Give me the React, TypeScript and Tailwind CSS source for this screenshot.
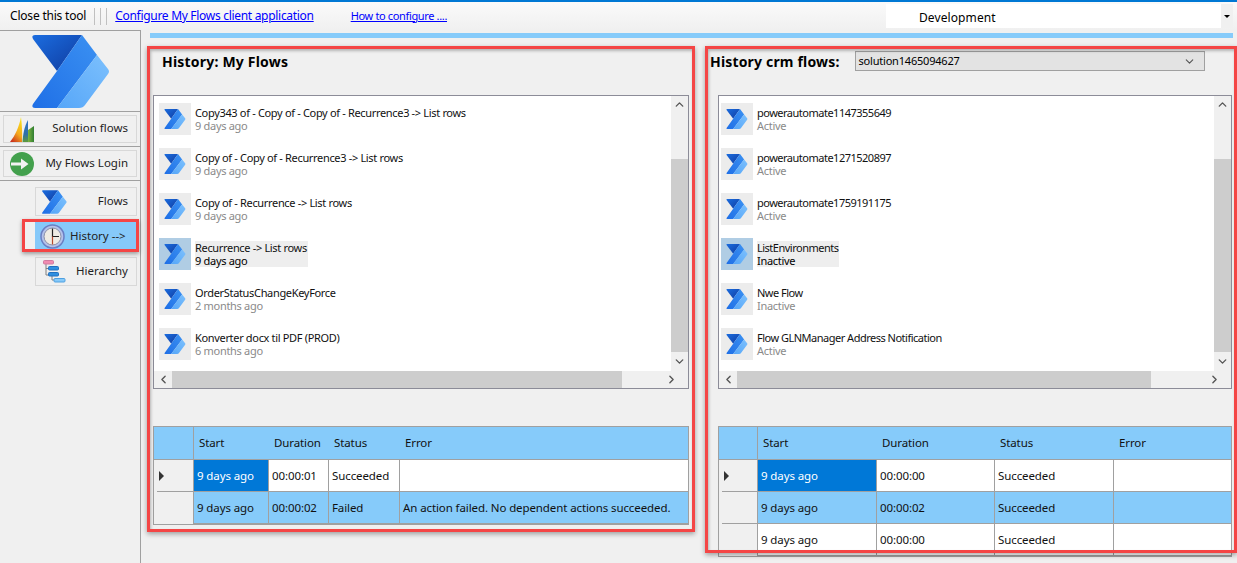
import { ChevronDown, ChevronLeft, ChevronRight, ChevronUp } from "lucide-react";

const myFlows = [
  { title: "Copy343 of - Copy of - Copy of - Recurrence3 -> List rows", sub: "9 days ago" },
  { title: "Copy of - Copy of - Recurrence3 -> List rows", sub: "9 days ago" },
  { title: "Copy of - Recurrence -> List rows", sub: "9 days ago" },
  { title: "Recurrence -> List rows", sub: "9 days ago", selected: true },
  { title: "OrderStatusChangeKeyForce", sub: "2 months ago" },
  { title: "Konverter docx til PDF (PROD)", sub: "6 months ago" },
];

const crmFlows = [
  { title: "powerautomate1147355649", sub: "Active" },
  { title: "powerautomate1271520897", sub: "Active" },
  { title: "powerautomate1759191175", sub: "Active" },
  { title: "ListEnvironments", sub: "Inactive", selected: true },
  { title: "Nwe Flow", sub: "Inactive" },
  { title: "Flow GLNManager Address Notification", sub: "Active" },
];

// power automate logo
function FlowIcon({ className }: { className: string }) {
  return (
    <svg viewBox="0 0 78 73" className={className}>
      <defs>
        <linearGradient id="flowDark" x1="0" y1="0" x2="1" y2="1">
          <stop offset="0" stopColor="#1b6de0" />
          <stop offset="1" stopColor="#0f3a9e" />
        </linearGradient>
        <linearGradient id="flowMid" x1="1" y1="0" x2="0" y2="1">
          <stop offset="0" stopColor="#3b91f2" />
          <stop offset="1" stopColor="#1f6fe6" />
        </linearGradient>
        <linearGradient id="flowLight" x1="1" y1="0" x2="0" y2="1">
          <stop offset="0" stopColor="#7cc0fd" />
          <stop offset="1" stopColor="#56a6f8" />
        </linearGradient>
      </defs>
      <path d="M3 0H50L25 36L1 4Q-1 0 3 0Z" fill="url(#flowDark)" />
      <path d="M50 0L65 20L25 73H3Q-1 73 1 69L25 36Z" fill="url(#flowMid)" />
      <path d="M65 20L76 34Q78 36.500 76 39L53 70Q51 73 47 73H25Z" fill="url(#flowLight)" />
    </svg>
  );
}

function DynamicsIcon() {
  return (
    <svg viewBox="0 0 24 25" className="h-[25px] w-[24px]">
      <defs>
        <linearGradient id="sail" x1="0.700" y1="0" x2="0.200" y2="1">
          <stop offset="0" stopColor="#f7e01c" />
          <stop offset="0.550" stopColor="#f5a81c" />
          <stop offset="1" stopColor="#c9301c" />
        </linearGradient>
        <linearGradient id="sailBlue" x1="0" y1="0" x2="0" y2="1">
          <stop offset="0" stopColor="#2f73c4" />
          <stop offset="0.650" stopColor="#2f6fa8" />
          <stop offset="1" stopColor="#5c9a3a" />
        </linearGradient>
        <linearGradient id="sailGreen" x1="0" y1="0" x2="1" y2="0">
          <stop offset="0" stopColor="#7db53f" />
          <stop offset="1" stopColor="#2f7d32" />
        </linearGradient>
      </defs>
      <path d="M0 25C5 19 9 10 11 0C12 8 12.500 17 12 25Z" fill="url(#sail)" />
      <path d="M12.500 25C13 18 14 10 18 3V25Z" fill="url(#sailBlue)" />
      <path d="M18 25V13L24 9V25Z" fill="url(#sailGreen)" />
    </svg>
  );
}

function LoginIcon() {
  return (
    <svg viewBox="0 0 24 24" className="h-[24px] w-[24px]">
      <circle cx="12" cy="12" r="12" fill="#43a04d" />
      <path d="M1 10.500H11V6.500L18.500 12L11 17.500V13.500H1Z" fill="#f2f2f2" />
    </svg>
  );
}

function ClockIcon() {
  return (
    <svg viewBox="0 0 25 25" className="h-[25px] w-[25px]">
      <circle cx="12.500" cy="12.500" r="11.500" fill="#b4c2ea" stroke="#6a7fc4" strokeWidth="1.500" />
      <circle cx="12.500" cy="12.500" r="8.500" fill="#efece4" stroke="#8a8fa8" />
      <path d="M12.500 4.500V12.500H19" fill="none" stroke="#222" strokeWidth="1.200" />
      <path d="M12.500 12.500V20.500" stroke="#b5482d" strokeWidth="1.200" />
    </svg>
  );
}

function HierarchyIcon() {
  return (
    <svg viewBox="0 0 24 23" className="h-[23px] w-[24px]">
      <path d="M4 4V15H7M4 8.500H7M10 16V20H13" fill="none" stroke="#808080" />
      <rect x="1.500" y="0.500" width="10" height="3.500" rx="1" fill="#f08cb0" stroke="#d07aa0" />
      <rect x="6.500" y="6.500" width="10" height="3.500" rx="1" fill="#2f8fe0" stroke="#2070c0" />
      <rect x="6.500" y="12.500" width="10" height="3.500" rx="1" fill="#2f8fe0" stroke="#2070c0" />
      <rect x="12" y="18.500" width="11" height="3.500" rx="1" fill="#86c9f9" stroke="#4fa0e0" />
    </svg>
  );
}

function FlowList({ items, thumbClass, padClass, titleClass }: { items: typeof myFlows; thumbClass: string; padClass: string; titleClass: string }) {
  return (
    <div className="flex h-[294px] flex-col border border-[#8c8c98] bg-white">
      <div className="flex min-h-0 flex-1">
        <div className={`flex-1 pt-[7px] ${padClass}`}>
          {items.map((item) => (
            <div key={item.title} className="mb-[13px] flex h-[32px] gap-[4px]">
              <div className={`flex h-[32px] w-[32px] items-center justify-center ${item.selected ? "bg-[#b0cde4]" : "bg-[#ececec]"}`}>
                <FlowIcon className="h-[20px] w-[22px]" />
              </div>
              <div className={`mt-[3px] h-[26px] text-[11px] leading-[13px] tracking-[-0.3px] ${item.selected ? "bg-[#eeeeee] pr-[1px] text-black" : "text-[#8a8a8a]"}`}>
                <div className={`text-[#111] ${titleClass}`}>{item.title}</div>
                <div>{item.sub}</div>
              </div>
            </div>
          ))}
        </div>
        <div className="flex w-[17px] flex-col items-center bg-[#f0f0f0]">
          <div className="flex h-[17px] items-center">
            <ChevronUp size={13} strokeWidth={2.500} className="text-[#555]" />
          </div>
          <div className="mt-[46px] h-[193px] w-full bg-[#cdcdcd]" />
          <div className="flex flex-1 items-center">
            <ChevronDown size={13} strokeWidth={2.500} className="text-[#555]" />
          </div>
        </div>
      </div>
      <div className="flex h-[17px] items-center bg-[#f0f0f0]">
        <div className="flex w-[18px] justify-center">
          <ChevronLeft size={13} strokeWidth={2.500} className="text-[#555]" />
        </div>
        <div className={`h-full bg-[#cdcdcd] ${thumbClass}`} />
        <div className="flex-1" />
        <div className="flex w-[34px] justify-center">
          <ChevronRight size={13} strokeWidth={2.500} className="text-[#555]" />
        </div>
      </div>
    </div>
  );
}

function RunGrid({ template, rows }: { template: string; rows: string[][] }) {
  return (
    <div className="mt-[37px] border border-[#a0a0a0] bg-[#f0f0f0] text-[11.500px] tracking-[-0.1px]">
      <div className={`grid h-[33px] border-b border-[#a0a0a0] bg-[#86cbfa] text-[#111] ${template}`}>
        <div className="border-r border-[#a0a0a0]" />
        {["Start", "Duration", "Status", "Error"].map((h) => (
          <div key={h} className="flex items-center pl-[5px]">
            <div className="mr-[5px] -ml-[5px] h-[30px] w-px bg-white first:hidden" />
            {h}
          </div>
        ))}
      </div>
      {rows.map((row, i) => (
        <div key={i} className={`grid h-[32px] ${template}`}>
          <div className="relative flex items-center border-r border-[#a0a0a0] pl-[5px]">
            {i === 0 && <div className="h-0 w-0 border-y-[5px] border-l-[5px] border-y-transparent border-l-[#333]" />}
            {i < rows.length - 1 && <div className="absolute bottom-0 left-[3px] right-0 h-px bg-[#a0a0a0]" />}
          </div>
          {row.map((cell, c) => (
            <div
              key={c}
              className={`flex items-center whitespace-nowrap border-r border-b border-[#a0a0a0] pl-[3px] text-[#111] last:border-r-0 ${
                i === 0 && c === 0
                  ? "bg-[#0078d7] text-white"
                  : i % 2 === 1
                  ? "bg-[#86cbfa]"
                  : "bg-white"
              }`}
            >
              {cell}
            </div>
          ))}
        </div>
      ))}
    </div>
  );
}

export default function App() {
  return (
    <div className="flex h-[563px] w-[1237px] flex-col overflow-hidden bg-[#f0f0f0] font-['Noto_Sans',sans-serif] text-black">
      {/* TOP BAR */}
      <div className="h-[2px] bg-[#0078d4]" />
      <div className="flex h-[28px] items-center bg-gradient-to-b from-[#fafafa] to-[#f0f0f0] text-[12px]">
        <span className="ml-[10px] tracking-[-0.2px]">Close this tool</span>
        <div className="ml-[8px] h-[17px] w-px bg-[#c0c0c0]" />
        <div className="ml-[5px] h-[17px] w-px bg-[#c0c0c0]" />
        <div className="ml-[5px] h-[17px] w-px bg-[#c0c0c0]" />
        <a className="ml-[8px] text-[#0000ff] underline tracking-[-0.3px]">Configure My Flows client application</a>
        <a className="ml-[37px] text-[11px] text-[#0000ff] underline tracking-[-0.35px]">How to configure ....</a>
        <div className="ml-auto flex h-[24px] w-[335px] items-center bg-white pl-[33px] pt-[3px] tracking-[0.1px]">Development</div>
        <div className="mr-[4px] flex h-[24px] w-[12px] items-center justify-center bg-[#f0f0f0]">
          <div className="h-0 w-0 border-x-[3px] border-t-[3px] border-x-transparent border-t-black" />
        </div>
      </div>

      <div className="flex min-h-0 flex-1">
        {/* SIDEBAR */}
        <aside className="w-[141px] shrink-0 border-t border-r border-[#a0a0a0] text-[11.500px] text-[#222]">
          <div className="flex h-[81px] items-center border-b border-[#a0a0a0] pl-[32px]">
            <FlowIcon className="h-[73px] w-[78px]" />
          </div>
          <div className="border-b border-[#a0a0a0] px-[3px] pb-[3px] pt-[3px]">
            <div className="flex h-[28px] items-center justify-between border border-[#d8d8d8] pl-[6px] pr-[8px]">
              <DynamicsIcon />
              <span className="pb-[2px]">Solution flows</span>
            </div>
          </div>
          <div className="border-b border-[#a0a0a0] px-[3px] py-[3px]">
            <div className="flex h-[27px] items-center justify-between border border-[#d8d8d8] pl-[6px] pr-[8px]">
              <LoginIcon />
              <span className="pb-[2px]">My Flows Login</span>
            </div>
          </div>
          <div className="ml-[35px] mr-[3px] mt-[6px] flex h-[29px] items-center justify-between border border-[#d8d8d8] pl-[6px] pr-[8px]">
            <FlowIcon className="h-[24px] w-[25px]" />
            <span className="pb-[2px]">Flows</span>
          </div>
          <div className="relative ml-[35px] mr-[3px] mt-[6px] flex h-[28px] items-center bg-[#86c9f9] pl-[5px]">
            <ClockIcon />
            <span className="ml-[5px] pb-[1px]">{"History -->"}</span>
            <div className="absolute -bottom-[2px] -left-[13px] -right-[2px] -top-[3px] border-[3px] border-[#f44545] shadow-[0_2px_4px_rgba(0,0,0,0.35)]" />
          </div>
          <div className="ml-[35px] mr-[3px] mt-[7px] flex h-[29px] items-center justify-between border border-[#d8d8d8] pl-[6px] pr-[8px]">
            <HierarchyIcon />
            <span className="pb-[2px]">Hierarchy</span>
          </div>
        </aside>

        {/* MAIN */}
        <main className="min-w-0 flex-1">
          <div className="ml-[9px] mr-[4px] mt-[3px] h-[5px] bg-[#86cbfa]" />
          <div className="ml-[6px] mt-[8px] flex gap-[10px]">
            <section className="relative h-[486px] w-[548px] shrink-0 px-[6px]">
              <h2 className="flex h-[49px] items-start pl-[9px] pt-[6px] text-[14px] font-bold leading-[20px] tracking-[0.2px]">History: My Flows</h2>
              <FlowList items={myFlows} thumbClass="w-[450px]" padClass="pl-[5px]" titleClass="tracking-[-0.33px]" />
              <RunGrid
                template="grid-cols-[40px_75px_60px_71px_1fr]"
                rows={[
                  ["9 days ago", "00:00:01", "Succeeded", ""],
                  ["9 days ago", "00:00:02", "Failed", "An action failed. No dependent actions succeeded."],
                ]}
              />
              <div className="absolute inset-0 border-[3px] border-[#f44545] shadow-[0_2px_5px_rgba(0,0,0,0.35),inset_1px_2px_3px_rgba(0,0,0,0.25)]" />
            </section>
            <section className="relative h-[507px] w-[532px] shrink-0 pl-[13px] pr-[5px]">
              <div className="flex h-[49px] items-start">
                <h2 className="-ml-[8px] pt-[6px] text-[14px] font-bold leading-[20px] tracking-[0.17px]">History crm flows:</h2>
                <div className="ml-[16px] mt-[5px] flex h-[20px] w-[350px] items-center justify-between border border-[#a0a0a0] bg-[#e3e3e3] pl-[2px] pr-[8px] text-[11px] tracking-[-0.2px]">
                  solution1465094627
                  <ChevronDown size={13} className="text-[#555]" />
                </div>
              </div>
              <FlowList items={crmFlows} thumbClass="w-[414px]" padClass="pl-[2px]" titleClass="tracking-[-0.5px]" />
              <RunGrid
                template="grid-cols-[39px_119px_118px_119px_1fr]"
                rows={[
                  ["9 days ago", "00:00:00", "Succeeded", ""],
                  ["9 days ago", "00:00:02", "Succeeded", ""],
                  ["9 days ago", "00:00:00", "Succeeded", ""],
                ]}
              />
              <div className="absolute inset-0 border-[3px] border-[#f44545] shadow-[0_2px_5px_rgba(0,0,0,0.35),inset_1px_2px_3px_rgba(0,0,0,0.25)]" />
            </section>
          </div>
        </main>
      </div>
    </div>
  );
}
